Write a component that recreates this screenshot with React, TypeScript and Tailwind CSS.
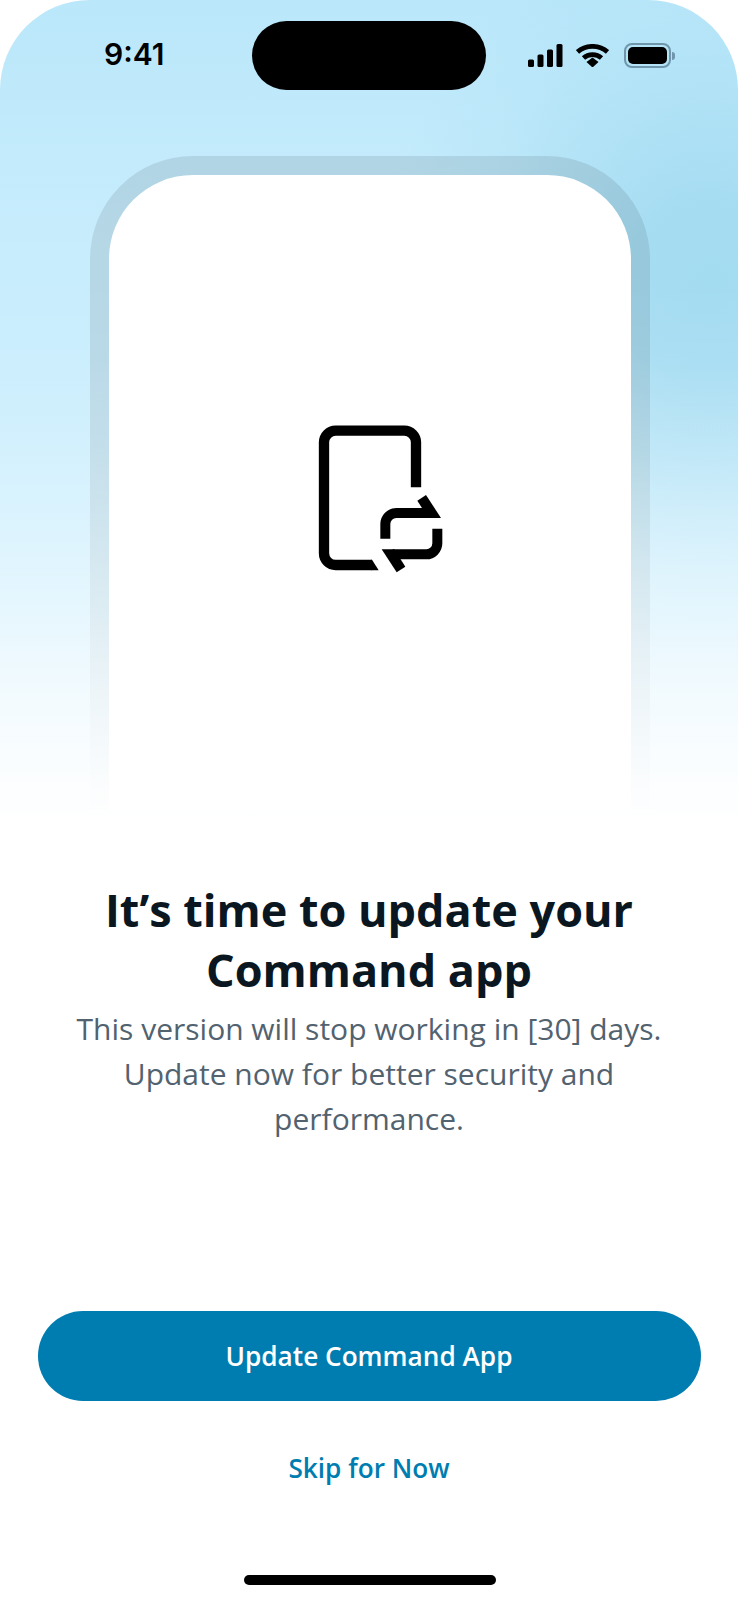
function SignalIcon() {
  return (
    <svg width="35" height="23" viewBox="0 0 35 23" fill="#000">
      <rect x="0" y="15.5" width="6" height="7.5" rx="1.5" />
      <rect x="9.5" y="10.5" width="6" height="12.5" rx="1.5" />
      <rect x="19" y="5.5" width="6" height="17.5" rx="1.5" />
      <rect x="28.5" y="0" width="6" height="23" rx="1.5" />
    </svg>
  );
}

function WifiIcon() {
  return (
    <svg width="33" height="23" viewBox="0 0 33 23" fill="none">
      <path d="M1.500 8C10 .5 23 .5 31.500 8" stroke="#000" strokeWidth="4.800" />
      <path d="M7.500 14C12.500 9.500 20.500 9.500 25.500 14" stroke="#000" strokeWidth="4.800" />
      <path d="M10.500 18L16.500 13.500L22.500 18L16.500 23.500Z" fill="#000" />
    </svg>
  );
}

function BatteryIcon() {
  return (
    <div className="flex items-center">
      <div className="h-[25px] w-[47px] rounded-[8px] border-2 border-[#6f96aa] p-[2px]">
        <div className="h-full w-full rounded-[5px] bg-black" />
      </div>
      <div className="ml-[1px] h-[8px] w-[3px] rounded-r-full bg-[#6f96aa]" />
    </div>
  );
}

function UpdateIcon() {
  return (
    <svg width="180" height="190" viewBox="0 0 540 570" fill="none">
      <path
        d="M378 262V127a35 35 0 0 0-35-35H137a35 35 0 0 0-35 35V460a35 35 0 0 0 35 35H245"
        stroke="#000"
        strokeWidth="31"
      />
      <path d="M243 479.500h3l20 31h-23z" fill="#000" />
      <path d="M286 416V372a33 33 0 0 1 33-33H420" stroke="#000" strokeWidth="30" />
      <path d="M382 302L408 285L453 354H415z" fill="#000" />
      <g transform="rotate(180 364 401)">
        <path d="M286 416V372a33 33 0 0 1 33-33H420" stroke="#000" strokeWidth="30" />
        <path d="M382 302L408 285L453 354H415z" fill="#000" />
      </g>
    </svg>
  );
}

export default function App() {
  return (
    <div className="relative h-[1600px] w-[738px] overflow-hidden bg-white font-['Open_Sans',sans-serif]">
      {/* sky background with darker blob on the right */}
      <div className="absolute inset-x-0 top-0 h-[830px] rounded-t-[90px] bg-[radial-gradient(ellipse_330px_370px_at_710px_290px,#a3dbf1_0%,#a3dbf1e6_25%,#a3dbf18c_50%,#a3dbf12e_75%,#a3dbf100_100%),linear-gradient(180deg,#bae7fa_0%,#c8edfd_30%,#cceefd_100%)]" />

      <div className="relative flex h-full flex-col items-center">
        {/* status bar */}
        <div className="relative z-10 grid h-[156px] w-full grid-cols-[1fr_234px_1fr] items-start pt-[21px]">
          <span className="mt-[15px] pl-[104px] font-['Inter',sans-serif] text-[30px] font-semibold leading-[36px] text-black">
            9:41
          </span>
          <div className="h-[69px] rounded-[35px] bg-black" />
          <div className="mt-[22px] flex items-center justify-end gap-[15px] pr-[63px]">
            <div className="mr-[-2px]">
              <SignalIcon />
            </div>
            <WifiIcon />
            <BatteryIcon />
          </div>
        </div>

        {/* device mock */}
        <div className="ml-[1px] flex h-[654px] w-[560px] items-start justify-center rounded-t-[103px] border-[19px] border-b-0 border-black/[0.09] bg-white bg-clip-padding">
          <div className="relative z-10 mt-[225px] ml-[20px]">
            <UpdateIcon />
          </div>
        </div>

        <h1 className="relative z-10 mt-[70px] text-center text-[45px] font-bold leading-[60px] text-[#0b1720]">
          It’s time to update your
          <br />
          Command app
        </h1>
        <p className="relative z-10 mt-[6px] w-[620px] text-center text-[30px] leading-[45px] text-[#52626f]">
          This version will stop working in [30] days. Update now for better security and performance.
        </p>

        <button className="relative z-10 mt-[170px] h-[90px] w-[663px] rounded-[45px] bg-[#007db0] pt-[2px] text-[26.2px] font-semibold text-white">
          Update Command App
        </button>
        <button className="relative z-10 mt-[46px] h-[42px] pt-[2px] text-[26.2px] font-semibold text-[#007db0]">
          Skip for Now
        </button>

        <div className="mt-auto mb-[15px] ml-[1px] h-[10px] w-[252px] rounded-full bg-black" />
      </div>

      {/* fade of sky and mock into white */}
      <div className="pointer-events-none absolute inset-x-0 top-[270px] h-[560px] bg-[linear-gradient(180deg,#fff0_0%,#ffffff0d_15%,#ffffff2b_30%,#ffffff54_45%,#ffffff85_60%,#ffffffbd_75%,#ffffffeb_90%,#fff_100%)]" />
    </div>
  );
}
